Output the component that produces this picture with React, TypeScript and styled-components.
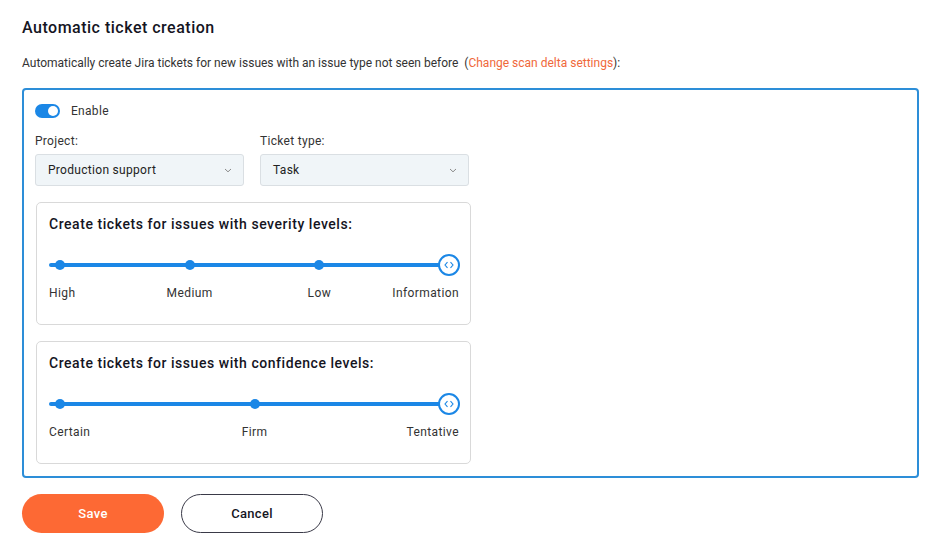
import React from "react";
import styled, { createGlobalStyle } from "styled-components";

const Global = createGlobalStyle`
  html, body { margin: 0; padding: 0; background: #fff; }
  body { font-family: Roboto, "Liberation Sans", Arial, sans-serif; color: #1c1c28; }
  * { box-sizing: border-box; }
`;

const Page = styled.div`
  width: 940px;
  height: 556px;
  padding: 17px 22px 0 22px;
  display: flex;
  flex-direction: column;
`;

const Title = styled.h2`
  margin: 0;
  font-size: 16px;
  font-weight: 500;
  letter-spacing: 0.5px;
  color: #15151f;
  line-height: 22px;
`;

const Desc = styled.p`
  margin: 16px 0 0 0;
  font-size: 12px;
  line-height: 16px;
  color: #333;
  letter-spacing: 0;
`;

const Link = styled.a`
  color: #f0683a;
  text-decoration: none;
`;

const Panel = styled.div`
  margin-top: 17px;
  width: 897px;
  height: 390px;
  border: 2px solid #2d8ed8;
  border-radius: 4px;
  padding: 12px 12px 0 11px;
  display: flex;
  flex-direction: column;
`;

const ToggleRow = styled.div`
  display: flex;
  align-items: center;
  gap: 11px;
  height: 18px;
`;

const Toggle = styled.div<{ on: boolean }>`
  width: 25px;
  height: 14px;
  border-radius: 7px;
  background: ${(p) => (p.on ? "#1b87e6" : "#ccc")};
  position: relative;
  &::after {
    content: "";
    position: absolute;
    top: 2px;
    left: ${(p) => (p.on ? "13px" : "2px")};
    width: 10px;
    height: 10px;
    border-radius: 50%;
    background: #fff;
  }
`;

const SmallText = styled.span`
  font-size: 12px;
  color: #333;
  letter-spacing: 0.3px;
`;

const FieldRow = styled.div`
  display: flex;
  gap: 16px;
  margin-top: 14px;
`;

const Field = styled.div`
  display: flex;
  flex-direction: column;
  gap: 6px;
  width: 209px;
`;

const Label = styled.label`
  font-size: 12px;
  color: #333;
  line-height: 14px;
  letter-spacing: 0.3px;
`;

const Select = styled.div`
  height: 32px;
  background: #f0f5f8;
  border: 1px solid #dadfe3;
  border-radius: 3px;
  display: flex;
  align-items: center;
  justify-content: space-between;
  padding: 0 11px 0 12px;
  font-size: 12px;
  color: #222;
  letter-spacing: 0.3px;
`;

const Card = styled.div`
  width: 435px;
  height: 123px;
  border: 1px solid #d9d9d9;
  border-radius: 5px;
  padding: 12px 12px 0 12px;
  margin-top: 16px;
  margin-left: 1px;
  display: flex;
  flex-direction: column;
`;

const CardTitle = styled.div`
  font-size: 14px;
  font-weight: 500;
  color: #15151f;
  letter-spacing: 0.55px;
  line-height: 18px;
`;

const SliderBox = styled.div`
  margin-top: 21px;
  position: relative;
  width: 410px;
  height: 22px;
`;

const Track = styled.div`
  position: absolute;
  left: 0;
  width: 400px;
  top: 9px;
  height: 4px;
  border-radius: 2px;
  background: #1b87e6;
`;

const Stops = styled.div`
  position: absolute;
  left: 11px;
  right: 10px;
  top: 0;
  bottom: 0;
`;

const Dot = styled.div`
  position: absolute;
  top: 6px;
  width: 10px;
  height: 10px;
  margin-left: -5px;
  border-radius: 50%;
  background: #1b87e6;
`;

const Thumb = styled.div`
  position: absolute;
  top: 0;
  width: 22px;
  height: 22px;
  margin-left: -11px;
  border-radius: 50%;
  background: #fff;
  border: 2px solid #1b87e6;
  display: flex;
  align-items: center;
  justify-content: center;
  color: #1b87e6;
`;

const Labels = styled.div`
  position: relative;
  width: 410px;
  height: 16px;
  margin-top: 10px;
`;

const StopLabel = styled.span<{ align: "start" | "center" | "end" }>`
  position: absolute;
  top: 0;
  font-size: 12px;
  color: #333;
  letter-spacing: 0.4px;
  white-space: nowrap;
  transform: ${(p) => (p.align === "center" ? "translateX(-50%)" : "none")};
`;

const Buttons = styled.div`
  display: flex;
  gap: 17px;
  margin-top: 16px;
`;

const Button = styled.button<{ primary?: boolean }>`
  width: 142px;
  height: 39px;
  border-radius: 20px;
  font-family: inherit;
  font-size: 13px;
  font-weight: 500;
  letter-spacing: 0.3px;
  cursor: pointer;
  background: ${(p) => (p.primary ? "#fd6934" : "#fff")};
  color: ${(p) => (p.primary ? "#fff" : "#15151f")};
  border: ${(p) => (p.primary ? "none" : "1px solid #3a3a48")};
`;

const Chevron = () => (
  <svg width="8" height="5" viewBox="0 0 8 5" fill="none">
    <path d="M1 1l3 2.8L7 1" stroke="#8a8a8a" strokeWidth="1" />
  </svg>
);

const ThumbIcon = () => (
  <svg width="10" height="8" viewBox="0 0 10 8" fill="none">
    <path d="M3.5 1.2L1 4l2.5 2.8M6.5 1.2L9 4 6.5 6.8" stroke="#1b87e6" strokeWidth="1.1" />
  </svg>
);

const INNER = 389;
const FIRST = 11;

function LevelSlider({ title, levels }: { title: string; levels: string[] }) {
  const n = levels.length;
  return (
    <Card>
      <CardTitle>{title}</CardTitle>
      <SliderBox>
        <Track />
        <Stops>
          {levels.map((l, i) => {
            const pct = (i / (n - 1)) * 100;
            return i === n - 1 ? (
              <Thumb key={l} style={{ left: `${pct}%` }}>
                <ThumbIcon />
              </Thumb>
            ) : (
              <Dot key={l} style={{ left: `${pct}%` }} />
            );
          })}
        </Stops>
      </SliderBox>
      <Labels>
        {levels.map((l, i) => {
          if (i === 0) return <StopLabel key={l} align="start" style={{ left: 0 }}>{l}</StopLabel>;
          if (i === n - 1) return <StopLabel key={l} align="end" style={{ right: 0 }}>{l}</StopLabel>;
          const x = FIRST + (i / (n - 1)) * INNER;
          return <StopLabel key={l} align="center" style={{ left: `${x}px` }}>{l}</StopLabel>;
        })}
      </Labels>
    </Card>
  );
}

export default function App() {
  return (
    <>
      <Global />
      <Page>
        <Title>Automatic ticket creation</Title>
        <Desc>
          Automatically create Jira tickets for new issues with an issue type not seen before&nbsp; (
          <Link href="#">Change scan delta settings</Link>):
        </Desc>
        <Panel>
          <ToggleRow>
            <Toggle on />
            <SmallText>Enable</SmallText>
          </ToggleRow>
          <FieldRow>
            <Field>
              <Label>Project:</Label>
              <Select>
                <span>Production support</span>
                <Chevron />
              </Select>
            </Field>
            <Field>
              <Label>Ticket type:</Label>
              <Select>
                <span>Task</span>
                <Chevron />
              </Select>
            </Field>
          </FieldRow>
          <LevelSlider
            title="Create tickets for issues with severity levels:"
            levels={["High", "Medium", "Low", "Information"]}
          />
          <LevelSlider
            title="Create tickets for issues with confidence levels:"
            levels={["Certain", "Firm", "Tentative"]}
          />
        </Panel>
        <Buttons>
          <Button primary>Save</Button>
          <Button>Cancel</Button>
        </Buttons>
      </Page>
    </>
  );
}
